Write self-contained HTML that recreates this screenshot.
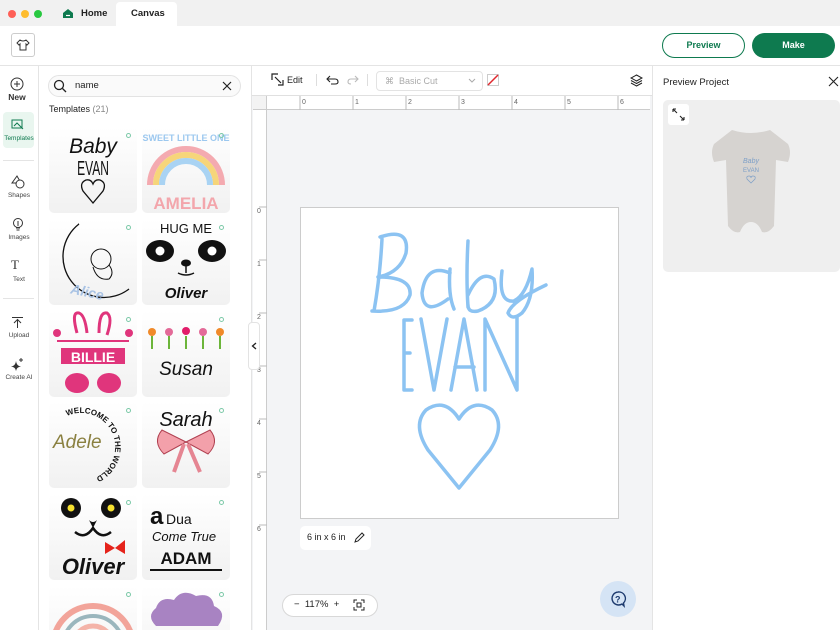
<!DOCTYPE html>
<html style="overflow:hidden;width:840px;height:630px"><head><meta charset="utf-8"><style>
*{box-sizing:border-box;margin:0;padding:0}
body{width:840px;height:630px;overflow:hidden;background:#fff;font-family:"Liberation Sans",sans-serif;color:#222;position:relative}
.a{position:absolute}
.tile{position:absolute;width:88px;height:86px;border-radius:5px;background:linear-gradient(#fff,#f1f1f1);overflow:hidden}
.dot{position:absolute;right:6px;top:6px;width:5px;height:5px;border-radius:50%;border:1px solid #7cc9a8}
.nav{position:absolute;left:0;width:38px;text-align:center;font-size:6.5px;color:#444}
</style></head><body>
<div class="a" style="left:0;top:0;width:840px;height:26px;background:#f1f1f1"></div>
<div class="a" style="left:8px;top:10px;width:8px;height:8px;border-radius:50%;background:#fe5f57"></div>
<div class="a" style="left:21px;top:10px;width:8px;height:8px;border-radius:50%;background:#febc2e"></div>
<div class="a" style="left:34px;top:10px;width:8px;height:8px;border-radius:50%;background:#28c840"></div>
<svg class="a" style="left:62px;top:8px" width="12" height="11"><path d="M1 5 L6 1 L11 5 L11 10 L1 10Z" fill="#0e7a4f"/><path d="M4 7.5 H8" stroke="#fff" stroke-width="1.2"/></svg>
<div class="a" style="left:81px;top:8px;font-size:9.5px;font-weight:bold">Home</div>
<div class="a" style="left:116px;top:2px;width:61px;height:24px;background:#fff;border-radius:4px 4px 0 0"></div>
<div class="a" style="left:131px;top:8px;font-size:9.5px;font-weight:bold">Canvas</div>
<div class="a" style="left:0;top:65px;width:840px;height:1px;background:#e4e4e4"></div>
<div class="a" style="left:11px;top:33px;width:24px;height:24px;border:1px solid #ccc;border-radius:3px"></div>
<svg class="a" style="left:16px;top:39px" width="14" height="12"><path d="M4 1 L1 4 L3 6 L4 5 V11 H10 V5 L11 6 L13 4 L10 1 Q7 3 4 1Z" fill="none" stroke="#333" stroke-width="1"/></svg>
<div class="a" style="left:662px;top:33px;width:83px;height:25px;border:1px solid #0e7a4f;border-radius:13px;color:#0e7a4f;font-size:9px;font-weight:bold;text-align:center;line-height:23px">Preview</div>
<div class="a" style="left:752px;top:33px;width:83px;height:25px;background:#0e7a4f;border-radius:13px;color:#fff;font-size:9px;font-weight:bold;text-align:center;line-height:25px">Make</div>
<div class="a" style="left:38px;top:66px;width:1px;height:564px;background:#e4e4e4"></div>
<svg class="a" style="left:10px;top:77px" width="14" height="14"><circle cx="7" cy="7" r="6" fill="none" stroke="#333"/><path d="M7 4V10M4 7H10" stroke="#333"/></svg>
<div class="nav" style="top:92px;font-size:8.5px;font-weight:bold;color:#333;left:-2px">New</div>
<div class="a" style="left:3px;top:112px;width:31px;height:36px;background:#e9f6ef;border-radius:4px"></div>
<svg class="a" style="left:11px;top:119px" width="13" height="11"><rect x="1" y="1" width="10" height="8" fill="none" stroke="#0e7a4f"/><path d="M3 7 L6 4 L12 10" stroke="#0e7a4f" fill="none"/></svg>
<div class="nav" style="top:135px;color:#0e7a4f">Templates</div>
<div class="a" style="left:3px;top:160px;width:31px;height:1px;background:#e4e4e4"></div>
<svg class="a" style="left:11px;top:175px" width="14" height="14"><path d="M6 1 L1 8 H10Z" fill="none" stroke="#333"/><circle cx="9" cy="9" r="4" fill="#fff" stroke="#333"/></svg>
<div class="nav" style="top:192px">Shapes</div>
<svg class="a" style="left:12px;top:217px" width="12" height="15"><circle cx="6" cy="6" r="4.5" fill="none" stroke="#333"/><path d="M4 11H8M4.5 13H7.5M6 4V9" stroke="#333"/></svg>
<div class="nav" style="top:234px">Images</div>
<div class="a" style="left:11px;top:257px;font-family:'Liberation Serif',serif;font-size:13px;color:#333">T</div>
<div class="nav" style="top:276px">Text</div>
<div class="a" style="left:3px;top:298px;width:31px;height:1px;background:#e4e4e4"></div>
<svg class="a" style="left:11px;top:316px" width="13" height="13"><path d="M1 1.5H12M6.5 4V12M3 7L6.5 3.5L10 7" stroke="#333" fill="none"/></svg>
<div class="nav" style="top:332px">Upload</div>
<svg class="a" style="left:10px;top:357px" width="15" height="14"><path d="M6 4 Q6.5 9 11 9.5 Q6.5 10 6 14 Q5.5 10 1 9.5 Q5.5 9 6 4Z" fill="#333"/><path d="M11 1V5M9 3H13" stroke="#333"/></svg>
<div class="nav" style="top:374px">Create AI</div>
<div class="a" style="left:251px;top:66px;width:1px;height:564px;background:#e4e4e4"></div>
<div class="a" style="left:48px;top:75px;width:193px;height:22px;border:1px solid #e3e3e3;border-radius:11px;background:#fafafa"></div>
<svg class="a" style="left:53px;top:79px" width="14" height="14"><circle cx="6" cy="6" r="4.5" fill="none" stroke="#222" stroke-width="1.3"/><path d="M9.5 9.5L13 13" stroke="#222" stroke-width="1.3"/></svg>
<div class="a" style="left:75px;top:80px;font-size:9.5px">name</div>
<svg class="a" style="left:222px;top:81px" width="10" height="10"><path d="M1 1L9 9M9 1L1 9" stroke="#222" stroke-width="1.2"/></svg>
<div class="a" style="left:49px;top:104px;font-size:9px">Templates <span style="color:#888">(21)</span></div>

<div class="a" style="left:39px;top:120px;width:212px;height:510px;overflow:hidden">
<div class="tile" style="left:10px;top:7px"><div class="dot"></div>
<svg width="88" height="86"><text x="44" y="26" text-anchor="middle" font-style="italic" font-size="21" fill="#111">Baby</text><text x="44" y="48" text-anchor="middle" font-size="20" fill="#111" transform="translate(44 0) scale(0.6 1) translate(-44 0)">EVAN</text><path d="M44 76 L34 64 Q30 56 37 53 Q42 52 44 57 Q46 52 51 53 Q58 56 54 64Z" fill="none" stroke="#111" stroke-width="1.3"/></svg></div>
<div class="tile" style="left:103px;top:7px"><div class="dot"></div>
<svg width="88" height="86"><text x="44" y="14" text-anchor="middle" font-size="9" font-weight="bold" fill="#9cc8ef">SWEET LITTLE ONE</text><path d="M8 58 A36 36 0 0 1 80 58" fill="none" stroke="#f4aab0" stroke-width="6"/><path d="M14 58 A30 30 0 0 1 74 58" fill="none" stroke="#f6d57a" stroke-width="6"/><path d="M20 58 A24 24 0 0 1 68 58" fill="none" stroke="#a9d3f3" stroke-width="6"/><text x="44" y="82" text-anchor="middle" font-size="17" font-weight="bold" fill="#f3a6ac">AMELIA</text></svg></div>
<div class="tile" style="left:10px;top:99px"><div class="dot"></div>
<svg width="88" height="86"><path d="M30 5 A40 40 0 1 0 80 70 A34 34 0 0 1 30 5Z" fill="none" stroke="#111" stroke-width="1.3"/><circle cx="52" cy="40" r="10" fill="none" stroke="#111"/><path d="M44 48 Q48 62 60 60 Q66 54 60 46" fill="none" stroke="#111"/><text x="22" y="76" font-size="14" font-style="italic" font-weight="bold" fill="#a9c3e4" transform="rotate(12 30 70)">Alice</text></svg></div>
<div class="tile" style="left:103px;top:99px"><div class="dot"></div>
<svg width="88" height="86"><text x="44" y="14" text-anchor="middle" font-size="13" fill="#111">HUG ME</text><ellipse cx="18" cy="32" rx="14" ry="11" fill="#111"/><ellipse cx="70" cy="32" rx="14" ry="11" fill="#111"/><circle cx="18" cy="32" r="4.5" fill="#fff"/><circle cx="70" cy="32" r="4.5" fill="#fff"/><ellipse cx="44" cy="44" rx="5" ry="3.5" fill="#111"/><path d="M44 46V54M36 54Q44 58 52 54" stroke="#111" fill="none" stroke-width="1.5"/><text x="44" y="79" text-anchor="middle" font-size="15" font-weight="bold" font-style="italic" fill="#111">Oliver</text></svg></div>
<div class="tile" style="left:10px;top:191px"><div class="dot"></div>
<svg width="88" height="86"><path d="M28 22 Q22 0 30 2 Q36 4 38 22M50 22 Q50 0 58 2 Q64 6 58 24" fill="none" stroke="#e0357c" stroke-width="3"/><path d="M8 30 H80" stroke="#e0357c" stroke-width="2"/><rect x="12" y="37" width="64" height="16" fill="#e0357c"/><text x="44" y="51" text-anchor="middle" font-size="14" font-weight="bold" fill="#fff">BILLIE</text><ellipse cx="28" cy="72" rx="12" ry="10" fill="#e0357c"/><ellipse cx="60" cy="72" rx="12" ry="10" fill="#e0357c"/><circle cx="8" cy="22" r="4" fill="#e0357c"/><circle cx="80" cy="22" r="4" fill="#e0357c"/></svg></div>
<div class="tile" style="left:103px;top:191px"><div class="dot"></div>
<svg width="88" height="86"><g fill="#e36a98"><circle cx="10" cy="21" r="4" fill="#f08a2a"/><circle cx="27" cy="21" r="4"/><circle cx="44" cy="20" r="4" fill="#e21d6a"/><circle cx="61" cy="21" r="4"/><circle cx="78" cy="21" r="4" fill="#f08a2a"/></g><path d="M10 25V38M27 25V38M44 25V38M61 25V38M78 25V38" stroke="#6cb53a" stroke-width="2"/><text x="44" y="64" text-anchor="middle" font-size="19" font-style="italic" fill="#111">Susan</text></svg></div>
<div class="tile" style="left:10px;top:282px"><div class="dot"></div>
<svg width="88" height="86"><path id="c" d="M18 14 A34 34 0 1 1 40 78" fill="none"/><text font-size="8" font-weight="bold" fill="#111"><textPath href="#c">WELCOME TO THE WORLD</textPath></text><text x="4" y="46" font-size="19" font-style="italic" fill="#8a8040">Adele</text></svg></div>
<div class="tile" style="left:103px;top:282px"><div class="dot"></div>
<svg width="88" height="86"><text x="44" y="24" text-anchor="middle" font-size="20" font-style="italic" fill="#111">Sarah</text><path d="M44 40 L20 28 Q10 40 22 52 L44 40 L68 28 Q78 40 66 52Z" fill="#f3a0aa" stroke="#b04050"/><path d="M42 42 L32 70 M46 42 L58 70" stroke="#e58592" stroke-width="4"/></svg></div>
<div class="tile" style="left:10px;top:374px"><div class="dot"></div>
<svg width="88" height="86"><circle cx="22" cy="14" r="10" fill="#111"/><circle cx="62" cy="14" r="10" fill="#111"/><circle cx="22" cy="14" r="3.5" fill="#f6e12f"/><circle cx="62" cy="14" r="3.5" fill="#f6e12f"/><path d="M40 26 Q44 30 48 26 L44 34Z" fill="#111"/><path d="M26 38 Q36 46 44 34 Q52 46 62 38" fill="none" stroke="#111" stroke-width="2.5"/><path d="M56 48 L66 54 L76 46 L76 60 L66 54 L56 60Z" fill="#e5231b"/><text x="44" y="80" text-anchor="middle" font-size="22" font-weight="bold" font-style="italic" fill="#111">Oliver</text></svg></div>
<div class="tile" style="left:103px;top:374px"><div class="dot"></div>
<svg width="88" height="86"><text x="8" y="30" font-size="24" font-weight="bold" fill="#111">a</text><text x="24" y="30" font-size="14" fill="#111">Dua</text><text x="10" y="47" font-size="13" font-style="italic" fill="#111">Come True</text><text x="44" y="70" text-anchor="middle" font-size="17" font-weight="bold" fill="#111">ADAM</text><path d="M8 76H80" stroke="#111" stroke-width="2"/></svg></div>
<div class="tile" style="left:10px;top:466px"><div class="dot"></div>
<svg width="88" height="86"><path d="M4 60 A40 40 0 0 1 84 60" fill="none" stroke="#f2a49a" stroke-width="6"/><path d="M14 60 A30 30 0 0 1 74 60" fill="none" stroke="#9ab6bd" stroke-width="4"/><path d="M24 60 A20 20 0 0 1 64 60" fill="none" stroke="#f4b3a8" stroke-width="5"/></svg></div>
<div class="tile" style="left:103px;top:466px"><div class="dot"></div>
<svg width="88" height="86"><path d="M14 40 Q4 30 14 22 Q18 10 32 14 Q40 2 54 10 Q70 6 72 20 Q86 26 76 40Z" fill="#a883c2"/></svg></div>
</div>
<div class="a" style="left:248px;top:322px;width:12px;height:48px;background:#fff;border:1px solid #e3e3e3;border-radius:4px;z-index:2"></div>
<svg class="a" style="left:251px;top:342px;z-index:3" width="6" height="8"><path d="M5 1L1.5 4L5 7" stroke="#222" fill="none" stroke-width="1.3"/></svg>

<div class="a" style="left:252px;top:96px;width:400px;height:534px;background:#f3f4f6"></div>
<div class="a" style="left:652px;top:66px;width:1px;height:564px;background:#e4e4e4"></div>
<svg class="a" style="left:271px;top:73px" width="13" height="13"><path d="M1 7V1H7M4 4L10 10M7 12H12V7" stroke="#222" fill="none" stroke-width="1.2"/></svg>
<div class="a" style="left:287px;top:75px;font-size:9px">Edit</div>
<div class="a" style="left:316px;top:74px;width:1px;height:12px;background:#ddd"></div>
<svg class="a" style="left:326px;top:75px" width="14" height="10"><path d="M4 1L1 4L4 7M1 4H9Q12 4 12 7Q12 9 9 9H5" stroke="#222" fill="none" stroke-width="1.1"/></svg>
<svg class="a" style="left:346px;top:75px" width="14" height="10"><path d="M9 1L12 4L9 7M12 4H5Q2 4 2 7Q2 9 5 9" stroke="#bbb" fill="none" stroke-width="1.1"/></svg>
<div class="a" style="left:367px;top:74px;width:1px;height:12px;background:#ddd"></div>
<div class="a" style="left:376px;top:71px;width:107px;height:20px;border:1px solid #e3e3e3;border-radius:4px"></div>
<div class="a" style="left:385px;top:76px;font-size:9px;color:#aaa">⌘&nbsp; Basic Cut</div>
<svg class="a" style="left:468px;top:78px" width="8" height="6"><path d="M1 1L4 4L7 1" stroke="#aaa" fill="none"/></svg>
<div class="a" style="left:487px;top:74px;width:12px;height:12px;border:1px solid #ccc"></div>
<svg class="a" style="left:487px;top:74px" width="12" height="12"><path d="M1 11L11 1" stroke="#e0282e" stroke-width="1.5"/></svg>
<svg class="a" style="left:630px;top:74px" width="13" height="13"><path d="M6.5 1L12 4L6.5 7L1 4Z" fill="none" stroke="#222"/><path d="M1 6.5L6.5 9.5L12 6.5M1 9L6.5 12L12 9" fill="none" stroke="#222"/></svg>
<div class="a" style="left:252px;top:95px;width:400px;height:1px;background:#e0e0e0"></div>
<div class="a" style="left:267px;top:96px;width:383px;height:14px;background:#fff;border-bottom:1px solid #ccc"></div>
<div class="a" style="left:253px;top:96px;width:14px;height:534px;background:#fff;border-right:1px solid #ccc"></div>
<div class="a" style="left:253px;top:96px;width:14px;height:14px;background:#f3f3f3;border-right:1px solid #ccc;border-bottom:1px solid #ccc"></div>
<svg class="a" style="left:267px;top:96px" width="383" height="14">
<g font-size="7" fill="#666" font-family="Liberation Sans"><text x="35" y="8">0</text><text x="88" y="8">1</text><text x="141" y="8">2</text><text x="194" y="8">3</text><text x="247" y="8">4</text><text x="300" y="8">5</text><text x="353" y="8">6</text></g>
<g stroke="#bbb"><path d="M33 0V14M86 0V14M139 0V14M192 0V14M245 0V14M298 0V14M351 0V14"/></g>
</svg>
<svg class="a" style="left:253px;top:110px" width="14" height="520">
<g font-size="7" fill="#666"><text x="4" y="103">0</text><text x="4" y="156">1</text><text x="4" y="209">2</text><text x="4" y="262">3</text><text x="4" y="315">4</text><text x="4" y="368">5</text><text x="4" y="421">6</text></g>
<g stroke="#bbb"><path d="M6 97H14M6 150H14M6 203H14M6 256H14M6 309H14M6 362H14M6 415H14"/></g>
</svg>
<div class="a" style="left:300px;top:207px;width:319px;height:312px;background:#fff;border:1px solid #ccc"></div>
<svg class="a" style="left:300px;top:207px" width="319" height="312">
<g fill="none" stroke="#8cc3f2" stroke-width="3.5" stroke-linecap="round" stroke-linejoin="round">
<path d="M82 32 Q80 70 74 104 M80 30 Q110 20 106 46 Q100 66 78 70 Q112 70 110 88 Q104 106 72 104"/>
<path d="M150 66 Q126 56 122 86 Q124 110 148 92 M150 62 Q148 88 154 102"/>
<path d="M168 34 Q166 70 168 100 M168 88 Q180 62 194 72 Q200 96 178 104 Q168 106 168 98"/>
<path d="M202 64 Q198 96 214 94 Q226 88 232 62 Q234 92 222 106 Q212 114 208 106 Q212 94 246 78"/>
<path d="M112 113H104V183H112M104 146H110"/>
<path d="M121 112L134 183L147 112"/>
<path d="M151 183L164 112L177 183M155 160H174"/>
<path d="M185 183V112L217 183V110"/>
<path d="M159 281 L128 243 Q112 218 126 203 Q145 190 159 212 Q173 190 192 203 Q206 218 190 243Z"/>
</g>
<text x="0" y="0" font-size="1" fill="#fff">Baby EVAN</text>
</svg>
<div class="a" style="left:300px;top:526px;width:71px;height:24px;background:#fff;border-radius:5px"></div>
<div class="a" style="left:307px;top:532px;font-size:9px;color:#222">6 in x 6 in</div>
<svg class="a" style="left:354px;top:532px" width="11" height="11"><path d="M1 10L2 7L8 1L10 3L4 9Z" fill="none" stroke="#222"/></svg>
<div class="a" style="left:282px;top:594px;width:96px;height:23px;background:#fff;border:1px solid #d8d8d8;border-radius:12px"></div>
<div class="a" style="left:294px;top:599px;font-size:9.5px;color:#222">−&nbsp;&nbsp;117% &nbsp;+</div>
<svg class="a" style="left:353px;top:599px" width="12" height="12"><path d="M1 4V1H4M8 1H11V4M11 8V11H8M4 11H1V8" stroke="#222" fill="none"/><rect x="4" y="4" width="4" height="4" fill="none" stroke="#222"/></svg>
<div class="a" style="left:600px;top:581px;width:36px;height:36px;border-radius:50%;background:#d5e4f5"></div>
<svg class="a" style="left:609px;top:590px" width="18" height="18"><path d="M9 2A6.5 6.5 0 1 0 13 14L15 16L14.5 13A6.5 6.5 0 0 0 9 2Z" fill="none" stroke="#1d3a6e" stroke-width="1.4"/><text x="6" y="12.5" font-size="9" font-weight="bold" fill="#1d3a6e">?</text></svg>
<div class="a" style="left:663px;top:77px;font-size:9.5px;color:#222">Preview Project</div>
<svg class="a" style="left:828px;top:76px" width="11" height="11"><path d="M1 1L10 10M10 1L1 10" stroke="#222" stroke-width="1.1"/></svg>
<div class="a" style="left:663px;top:100px;width:177px;height:172px;background:#efefef;border-radius:5px"></div>
<div class="a" style="left:668px;top:104px;width:21px;height:21px;background:#fff;border-radius:3px"></div>
<svg class="a" style="left:671px;top:107px" width="15" height="15"><path d="M2 2L6 6M2 2V5M2 2H5M13 13L9 9M13 13V10M13 13H10" stroke="#222" stroke-width="1.1" fill="none"/></svg>
<svg class="a" style="left:708px;top:126px" width="86" height="118"><path d="M24 4 Q43 10 62 4 L80 18 Q84 26 80 36 L68 34 L66 100 Q60 108 54 106 Q50 96 43 96 Q36 96 32 106 Q26 108 20 100 L18 34 L6 36 Q2 26 6 18Z" fill="#d6d3d0"/><text x="43" y="37" text-anchor="middle" font-size="7" font-style="italic" fill="#7d9fc7">Baby</text><text x="43" y="46" text-anchor="middle" font-size="6" fill="#7d9fc7">EVAN</text><path d="M43 57L39 53Q38 50 41 50Q43 50 43 52Q43 50 45 50Q48 50 47 53Z" fill="none" stroke="#7d9fc7" stroke-width=".7"/></svg>
</body></html>
